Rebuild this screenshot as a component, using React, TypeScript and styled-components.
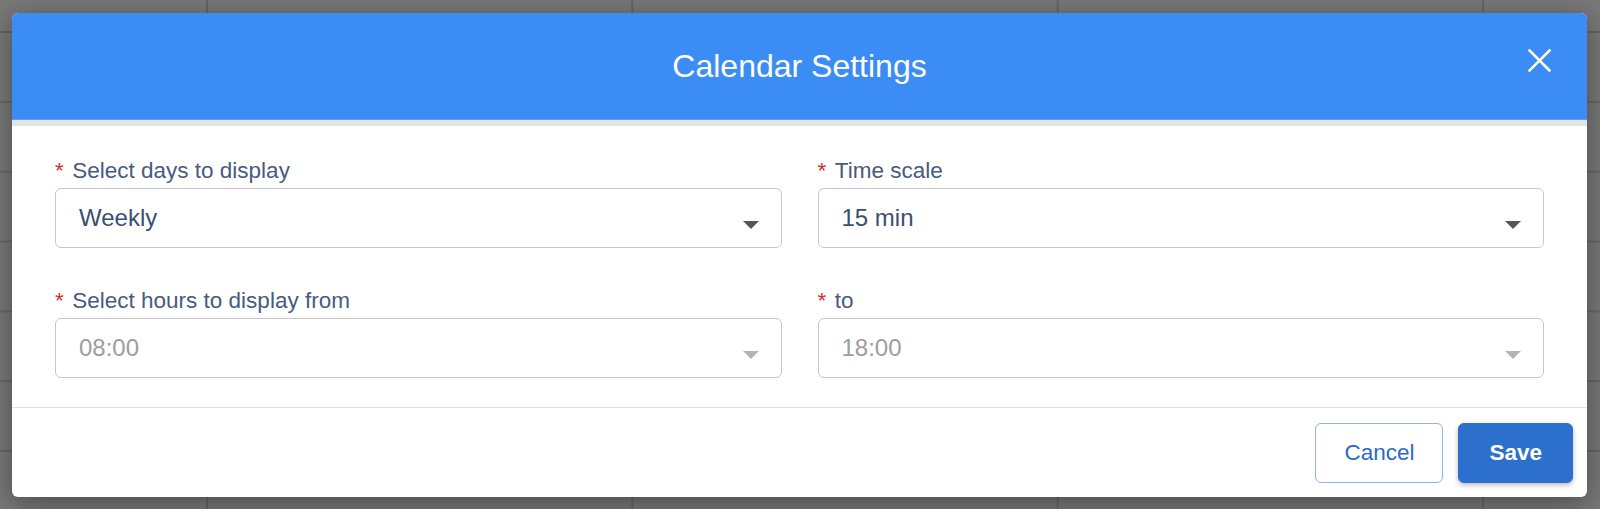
import React from "react";
import styled, { createGlobalStyle } from "styled-components";

const GlobalStyle = createGlobalStyle`
  html, body {
    margin: 0;
    padding: 0;
  }
  body {
    font-family: "Liberation Sans", Arial, Helvetica, sans-serif;
  }
  #root {
    width: 1600px;
    height: 509px;
  }
`;

const Backdrop = styled.div`
  box-sizing: border-box;
  width: 1600px;
  height: 509px;
  padding: 13px 13px 12px 12px;
  display: flex;
  background-color: #787878;
  background-image:
    linear-gradient(to right, #666666 0, #666666 2px, transparent 2px),
    linear-gradient(to bottom, #666666 0, #666666 2px, transparent 2px);
  background-size: 425.33px 100%, 100% 69.83px;
  background-position: 206px 0, 0 31px;
  background-repeat: repeat-x, repeat-y;
  overflow: hidden;
`;

const Modal = styled.div`
  flex: 1;
  display: flex;
  flex-direction: column;
  background: #ffffff;
  border-radius: 6px;
  overflow: hidden;
  box-shadow: 0 6px 28px rgba(0, 0, 0, 0.38);
`;

const Header = styled.header`
  height: 107px;
  flex: none;
  display: grid;
  grid-template-columns: 1fr auto 1fr;
  align-items: center;
  padding: 0 36px;
  background: #3c8cf6;
  border-bottom: 6px solid #e3e3e3;
  box-shadow: inset 0 -1px 0 #5b9df6;
`;

const Title = styled.h1`
  grid-column: 2;
  margin: 0;
  font-size: 32px;
  font-weight: 400;
  color: #ffffff;
`;

const CloseButton = styled.button`
  grid-column: 3;
  justify-self: end;
  width: 23px;
  height: 23px;
  padding: 0;
  margin-bottom: 12px;
  border: none;
  background: transparent;
  cursor: pointer;
  display: flex;
  svg {
    display: block;
  }
`;

const Body = styled.div`
  padding: 32px 43px 29px;
`;

const FieldGrid = styled.div`
  display: grid;
  grid-template-columns: 1fr 1fr;
  column-gap: 36px;
  row-gap: 40px;
`;

const Field = styled.div`
  display: flex;
  flex-direction: column;
  gap: 4px;
`;

const Label = styled.label`
  font-size: 22.5px;
  line-height: 26px;
  color: #485b80;
  white-space: nowrap;
`;

const Required = styled.span`
  color: #d3302f;
  margin-right: 8.5px;
`;

const SelectBox = styled.div<{ $disabled?: boolean }>`
  box-sizing: border-box;
  height: 60px;
  display: flex;
  align-items: center;
  justify-content: space-between;
  padding: 0 22px 0 23px;
  border: 1px solid #c6c6c6;
  border-radius: 6px;
  background: #ffffff;
  cursor: ${(p) => (p.$disabled ? "default" : "pointer")};
`;

const Value = styled.span<{ $disabled?: boolean }>`
  font-size: 24px;
  color: ${(p) => (p.$disabled ? "#9d9d9d" : "#3c4e73")};
`;

const Caret = styled.span<{ $disabled?: boolean }>`
  width: 0;
  height: 0;
  margin-top: 13px;
  border-left: 8px solid transparent;
  border-right: 8px solid transparent;
  border-top: 8px solid ${(p) => (p.$disabled ? "#b3b3b3" : "#565656")};
`;

const Footer = styled.footer`
  flex: none;
  display: flex;
  justify-content: flex-end;
  gap: 15px;
  padding: 15px 14px 14px;
  border-top: 1px solid #e2e2e2;
`;

const Button = styled.button<{ $primary?: boolean }>`
  height: 60px;
  padding: 0 ${(p) => (p.$primary ? "30px" : "28px")};
  border-radius: 6px;
  font-family: inherit;
  font-size: 22.5px;
  font-weight: ${(p) => (p.$primary ? 700 : 400)};
  cursor: pointer;
  color: ${(p) => (p.$primary ? "#ffffff" : "#2a6bc9")};
  background: ${(p) => (p.$primary ? "#2d6fcd" : "#ffffff")};
  border: 1px solid ${(p) => (p.$primary ? "#2d6fcd" : "#8cb3ea")};
  box-shadow: ${(p) => (p.$primary ? "0 2px 5px rgba(0, 0, 0, 0.28)" : "none")};
`;

type FieldDef = { label: string; value: string; disabled?: boolean };

const fields: FieldDef[] = [
  { label: "Select days to display", value: "Weekly" },
  { label: "Time scale", value: "15 min" },
  { label: "Select hours to display from", value: "08:00", disabled: true },
  { label: "to", value: "18:00", disabled: true },
];

export default function App() {
  return (
    <>
      <GlobalStyle />
      <Backdrop>
        <Modal>
          <Header>
            <Title>Calendar Settings</Title>
            <CloseButton aria-label="Close">
              <svg width="23" height="23" viewBox="0 0 23 23">
                <path
                  d="M1.5 1.5 L21.5 21.5 M21.5 1.5 L1.5 21.5"
                  stroke="#ffffff"
                  strokeWidth="2.6"
                  strokeLinecap="square"
                />
              </svg>
            </CloseButton>
          </Header>
          <Body>
            <FieldGrid>
              {fields.map((f) => (
                <Field key={f.label}>
                  <Label>
                    <Required>*</Required>
                    {f.label}
                  </Label>
                  <SelectBox $disabled={f.disabled}>
                    <Value $disabled={f.disabled}>{f.value}</Value>
                    <Caret $disabled={f.disabled} />
                  </SelectBox>
                </Field>
              ))}
            </FieldGrid>
          </Body>
          <Footer>
            <Button>Cancel</Button>
            <Button $primary>Save</Button>
          </Footer>
        </Modal>
      </Backdrop>
    </>
  );
}
